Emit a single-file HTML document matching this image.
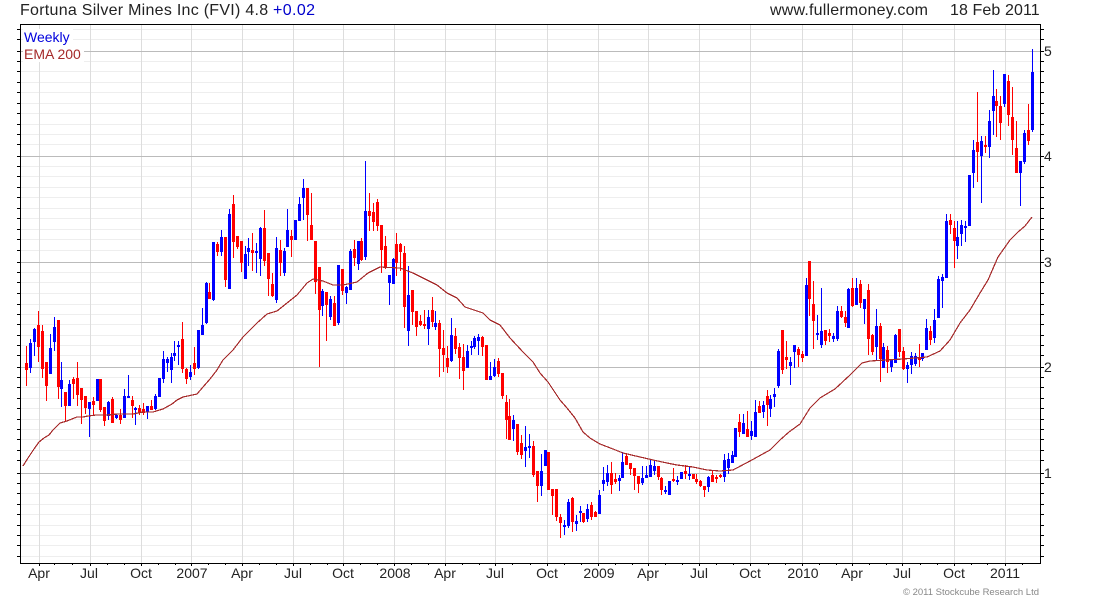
<!DOCTYPE html>
<html><head><meta charset="utf-8"><title>Fortuna Silver Mines Inc (FVI)</title>
<style>
html,body{margin:0;padding:0;background:#fff;width:1100px;height:600px;overflow:hidden}
svg{display:block}
text{font-family:"Liberation Sans",Arial,sans-serif}
.l{font-size:14px;fill:#222;text-anchor:middle}
.r{font-size:14px;fill:#222}
.t{font-size:16px;fill:#222}
</style></head><body>
<svg width="1100" height="600" viewBox="0 0 1100 600" xmlns="http://www.w3.org/2000/svg">
<rect width="1100" height="600" fill="#fff"/>
<g shape-rendering="crispEdges" fill="none">
<!-- minor horizontal grid -->
<path stroke="#eee" d="M21 29.5H1040M21 39.5H1040M21 61.5H1040M21 71.5H1040M21 82.5H1040M21 92.5H1040M21 103.5H1040M21 113.5H1040M21 124.5H1040M21 134.5H1040M21 144.5H1040M21 166.5H1040M21 176.5H1040M21 187.5H1040M21 197.5H1040M21 208.5H1040M21 218.5H1040M21 229.5H1040M21 239.5H1040M21 250.5H1040M21 272.5H1040M21 282.5H1040M21 293.5H1040M21 304.5H1040M21 314.5H1040M21 324.5H1040M21 335.5H1040M21 345.5H1040M21 355.5H1040M21 377.5H1040M21 387.5H1040M21 398.5H1040M21 408.5H1040M21 419.5H1040M21 429.5H1040M21 439.5H1040M21 450.5H1040M21 460.5H1040M21 483.5H1040M21 493.5H1040M21 504.5H1040M21 514.5H1040M21 525.5H1040M21 535.5H1040M21 545.5H1040M21 556.5H1040"/>
<!-- vertical grid -->
<path stroke="#ddd" d="M39.5 25V563M90.5 25V563M141.5 25V563M191.5 25V563M242.5 25V563M293.5 25V563M343.5 25V563M394.5 25V563M445.5 25V563M495.5 25V563M547.5 25V563M598.5 25V563M648.5 25V563M699.5 25V563M750.5 25V563M802.5 25V563M852.5 25V563M902.5 25V563M954.5 25V563M1005.5 25V563"/>
<!-- major horizontal grid -->
<path stroke="#bbb" d="M21 51.5H1040M21 156.5H1040M21 262.5H1040M21 367.5H1040M21 473.5H1040"/>
<!-- legend backing -->
<rect x="23" y="29" width="50" height="16" fill="#fff"/>
<rect x="23" y="45" width="61" height="17" fill="#fff"/>
<!-- red candles -->
<path stroke="#f00" stroke-width="1" d="M26.5 346V386M38.5 311V362M42.5 325V378M46.5 362V401M58.5 320V399M65.5 392V422M73.5 377V399M77.5 362V406M81.5 388V424M85.5 396V414M93.5 397V415M100.5 379V412M104.5 407V426M112.5 397V423M120.5 409V424M132.5 396V418M139.5 405V415M143.5 403V415M151.5 400V410M182.5 322V373M186.5 368V384M194.5 347V375M209.5 283V299M217.5 242V256M225.5 237V287M233.5 195V258M237.5 236V249M241.5 241V272M252.5 233V271M264.5 210V266M268.5 253V296M272.5 273V297M280.5 240V276M291.5 230V257M307.5 188V241M311.5 193V240M315.5 241V294M319.5 267V367M326.5 292V341M334.5 296V326M342.5 269V295M354.5 240V266M361.5 238V261M369.5 193V231M373.5 203V231M377.5 199V231M381.5 225V273M385.5 236V269M396.5 233V276M400.5 243V271M404.5 246V328M412.5 290V325M416.5 311V336M420.5 315V326M424.5 310V329M432.5 297V327M439.5 320V377M443.5 330V372M447.5 346V373M455.5 328V354M459.5 343V379M463.5 344V390M482.5 336V356M486.5 345V380M498.5 358V377M502.5 373V399M506.5 395V439M509.5 399V440M517.5 424V455M521.5 435V459M533.5 441V477M537.5 471V502M548.5 452V490M552.5 489V515M556.5 489V521M560.5 514V538M572.5 497V532M583.5 513V523M591.5 502V520M595.5 511V517M611.5 462V494M615.5 473V484M626.5 453V465M630.5 463V475M634.5 468V490M638.5 476V493M658.5 466V480M661.5 477V495M673.5 468V482M685.5 465V479M693.5 474V479M696.5 474V484M700.5 480V487M704.5 486V497M712.5 471V482M716.5 475V483M720.5 474V478M739.5 414V437M747.5 411V437M759.5 401V413M767.5 390V426M782.5 330V374M786.5 341V369M798.5 347V367M802.5 351V362M809.5 261V316M813.5 281V349M825.5 330V345M829.5 329V342M841.5 306V318M845.5 311V327M852.5 278V307M860.5 280V308M868.5 284V355M872.5 334V355M880.5 323V382M887.5 346V373M899.5 329V357M903.5 347V370M919.5 344V367M930.5 326V345M950.5 214V234M954.5 221V268M977.5 92V182M985.5 136V153M996.5 89V137M1000.5 96V140M1008.5 75V126M1012.5 87V155M1016.5 121V173M1028.5 104V145"/>
<path stroke="#f00" stroke-width="3" d="M26.5 363V370M38.5 325V347M42.5 331V369M46.5 362V386M58.5 320V387M65.5 392V406M73.5 379V384M77.5 378V395M81.5 388V400M85.5 396V408M93.5 401V405M100.5 379V410M104.5 407V421M112.5 399V423M120.5 415V420M132.5 400V406M139.5 408V413M143.5 409V413M151.5 406V410M182.5 339V369M186.5 369V379M194.5 363V369M209.5 292V299M217.5 244V252M225.5 237V280M233.5 204V242M237.5 236V247M241.5 241V263M252.5 250V253M264.5 228V261M268.5 253V279M272.5 284V296M280.5 250V263M291.5 236V240M307.5 188V215M311.5 225V240M315.5 241V282M319.5 267V310M326.5 292V305M334.5 303V326M342.5 269V291M354.5 249V258M361.5 241V260M369.5 211V216M373.5 212V222M377.5 202V226M381.5 225V250M385.5 246V268M396.5 244V263M400.5 244V252M404.5 253V307M412.5 290V312M416.5 311V327M420.5 321V325M424.5 324V326M432.5 310V322M439.5 323V349M443.5 348V355M447.5 358V367M455.5 336V349M459.5 347V358M463.5 357V371M482.5 337V347M486.5 345V380M498.5 361V374M502.5 373V396M506.5 402V420M509.5 416V440M517.5 424V452M521.5 443V455M533.5 446V475M537.5 471V486M548.5 452V490M552.5 489V496M556.5 489V517M560.5 517V523M572.5 498V522M583.5 513V522M591.5 505V517M595.5 512V517M611.5 473V485M615.5 479V482M626.5 456V465M630.5 463V469M634.5 468V476M638.5 476V484M658.5 466V477M661.5 478V490M673.5 479V481M685.5 471V474M693.5 474V479M696.5 479V482M700.5 481V486M704.5 486V490M712.5 475V482M716.5 477V479M720.5 475V477M739.5 422V432M747.5 429V437M759.5 406V413M767.5 396V405M782.5 330V370M786.5 357V360M798.5 349V355M802.5 354V358M809.5 261V299M813.5 304V321M825.5 330V341M829.5 333V336M841.5 311V317M845.5 317V323M852.5 288V306M860.5 284V303M868.5 290V339M872.5 335V352M880.5 326V359M887.5 350V362M899.5 329V352M903.5 351V369M919.5 357V360M930.5 331V340M950.5 220V225M954.5 228V241M977.5 142V152M985.5 145V147M996.5 101V106M1000.5 106V123M1008.5 81V115M1012.5 117V140M1016.5 148V173M1028.5 130V141"/>
<!-- blue candles -->
<path stroke="#00f" stroke-width="1" d="M30.5 339V373M34.5 328V356M50.5 334V374M54.5 317V351M61.5 362V407M69.5 380V406M89.5 402V437M97.5 379V401M108.5 401V420M116.5 414V419M124.5 389V418M128.5 375V398M135.5 407V425M147.5 406V419M155.5 394V410M159.5 378V397M163.5 351V383M167.5 357V372M171.5 353V383M174.5 341V361M178.5 341V365M190.5 365V380M198.5 330V369M202.5 308V335M206.5 282V324M213.5 242V301M221.5 230V256M229.5 209V289M245.5 246V279M248.5 238V266M256.5 243V273M260.5 227V276M276.5 237V303M284.5 248V276M287.5 209V247M295.5 220V240M299.5 197V221M303.5 179V220M322.5 289V316M330.5 296V320M338.5 265V325M346.5 286V304M350.5 249V290M358.5 241V270M365.5 161V260M389.5 275V305M393.5 258V284M408.5 266V346M428.5 310V345M435.5 311V330M451.5 318V362M467.5 345V368M471.5 341V355M474.5 336V349M478.5 334V355M490.5 362V380M494.5 359V377M513.5 415V441M525.5 426V467M529.5 434V458M541.5 454V496M545.5 450V466M564.5 520V535M568.5 499V528M576.5 515V531M580.5 506V522M587.5 504V522M599.5 490V514M603.5 467V491M607.5 465V486M619.5 475V491M622.5 452V478M642.5 466V485M646.5 466V478M650.5 459V477M654.5 461V475M665.5 486V494M669.5 481V495M677.5 476V485M681.5 472V479M689.5 467V480M708.5 476V492M724.5 454V482M728.5 453V474M732.5 451V463M735.5 428V457M743.5 414V434M751.5 421V440M755.5 400V437M763.5 401V418M770.5 395V417M774.5 388V407M778.5 349V388M790.5 357V385M794.5 345V368M806.5 278V356M817.5 315V340M821.5 288V348M833.5 333V342M837.5 306V341M848.5 288V328M856.5 278V305M864.5 299V324M876.5 309V360M883.5 343V368M891.5 359V372M895.5 334V363M907.5 362V383M911.5 352V374M915.5 353V366M922.5 353V361M926.5 319V350M934.5 309V343M938.5 276V318M942.5 274V308M946.5 214V278M957.5 221V259M961.5 220V246M965.5 221V242M969.5 175V226M973.5 140V188M981.5 136V203M989.5 110V158M993.5 70V135M1004.5 74V107M1020.5 161V206M1024.5 130V164M1032.5 49V132"/>
<path stroke="#00f" stroke-width="3" d="M30.5 343V368M34.5 329V342M50.5 348V374M54.5 327V342M61.5 380V389M69.5 384V406M89.5 402V409M97.5 379V401M108.5 402V416M116.5 415V418M124.5 396V418M128.5 396V398M135.5 408V410M147.5 406V412M155.5 396V409M159.5 378V397M163.5 359V379M167.5 359V363M171.5 357V370M174.5 353V356M178.5 345V347M190.5 372V377M198.5 330V368M202.5 325V335M206.5 283V323M213.5 242V300M221.5 237V252M229.5 214V289M245.5 254V279M248.5 248V252M256.5 251V253M260.5 228V259M276.5 248V300M284.5 251V273M287.5 230V247M295.5 220V240M299.5 204V221M303.5 188V198M322.5 291V306M330.5 299V317M338.5 265V323M346.5 287V293M350.5 251V290M358.5 241V264M365.5 211V257M389.5 275V283M393.5 259V284M408.5 295V331M428.5 317V329M435.5 323V327M451.5 335V361M467.5 351V368M471.5 346V348M474.5 338V347M478.5 337V341M490.5 376V380M494.5 367V376M513.5 420V429M525.5 447V451M529.5 446V448M541.5 471V486M545.5 450V466M564.5 525V527M568.5 502V526M576.5 521V524M580.5 511V513M587.5 509V519M599.5 495V514M603.5 480V484M607.5 473V482M619.5 478V481M622.5 462V478M642.5 478V483M646.5 475V478M650.5 465V477M654.5 466V471M665.5 490V492M669.5 481V495M677.5 480V482M681.5 472V479M689.5 474V476M708.5 477V487M724.5 460V477M728.5 459V468M732.5 455V463M735.5 428V457M743.5 423V434M751.5 431V436M755.5 412V437M763.5 405V412M770.5 399V409M774.5 394V397M778.5 351V386M790.5 362V366M794.5 345V352M806.5 285V356M817.5 333V335M821.5 331V345M833.5 336V339M837.5 311V339M848.5 289V328M856.5 288V305M864.5 299V309M876.5 326V347M883.5 347V368M891.5 360V367M895.5 335V363M907.5 365V369M911.5 356V365M915.5 356V364M922.5 353V359M926.5 328V350M934.5 320V338M938.5 279V318M942.5 277V281M946.5 221V278M957.5 237V246M961.5 225V234M965.5 226V228M969.5 175V226M973.5 150V173M981.5 141V156M989.5 121V147M993.5 96V111M1004.5 74V104M1020.5 161V173M1024.5 133V162M1032.5 72V130"/>
<!-- EMA -->
<polyline stroke="#a52a2a" stroke-width="1.2" points="23,466 28,458 34,449 39,442 44,438 49,435 53,430 60,423 67,421 72,419 77,417 83,417 88,416 96,415 107,415 118,414 133,414 143,412 153,412 163,409 172,404 177,400 183,397 197,394 203,387 210,379 217,370 223,360 233,350 243,337 257,323 267,314 277,311 287,303 297,295 307,283 313,279 323,281 333,285 343,285 357,282 368,273 380,267 400,268 413,273 423,278 437,285 447,293 457,298 465,307 483,313 490,320 500,325 510,338 523,352 533,362 540,373 548,382 560,400 567,408 575,418 583,432 590,438 600,444 613,449 623,453 640,457 653,460 667,463 677,465 693,467 707,470 720,471 733,470 750,461 770,450 780,440 789,432 800,424 810,408 820,398 830,392 835,389 850,375 862,363 870,361 903,359 927,357 940,351 950,340 960,323 970,310 980,293 988,280 998,257 1010,240 1018,232 1025,226 1032,217"/>
<!-- y ticks left -->
<path stroke="#000" d="M17 29.5H20M17 39.5H20M17 51.5H20M17 61.5H20M17 71.5H20M17 82.5H20M17 92.5H20M17 103.5H20M17 113.5H20M17 124.5H20M17 134.5H20M17 144.5H20M17 156.5H20M17 166.5H20M17 176.5H20M17 187.5H20M17 197.5H20M17 208.5H20M17 218.5H20M17 229.5H20M17 239.5H20M17 250.5H20M17 262.5H20M17 272.5H20M17 282.5H20M17 293.5H20M17 304.5H20M17 314.5H20M17 324.5H20M17 335.5H20M17 345.5H20M17 355.5H20M17 367.5H20M17 377.5H20M17 387.5H20M17 398.5H20M17 408.5H20M17 419.5H20M17 429.5H20M17 439.5H20M17 450.5H20M17 460.5H20M17 473.5H20M17 483.5H20M17 493.5H20M17 504.5H20M17 514.5H20M17 525.5H20M17 535.5H20M17 545.5H20M17 556.5H20"/>
<!-- y ticks right -->
<path stroke="#000" d="M1041 29.5H1044M1041 39.5H1044M1041 51.5H1044M1041 61.5H1044M1041 71.5H1044M1041 82.5H1044M1041 92.5H1044M1041 103.5H1044M1041 113.5H1044M1041 124.5H1044M1041 134.5H1044M1041 144.5H1044M1041 156.5H1044M1041 166.5H1044M1041 176.5H1044M1041 187.5H1044M1041 197.5H1044M1041 208.5H1044M1041 218.5H1044M1041 229.5H1044M1041 239.5H1044M1041 250.5H1044M1041 262.5H1044M1041 272.5H1044M1041 282.5H1044M1041 293.5H1044M1041 304.5H1044M1041 314.5H1044M1041 324.5H1044M1041 335.5H1044M1041 345.5H1044M1041 355.5H1044M1041 367.5H1044M1041 377.5H1044M1041 387.5H1044M1041 398.5H1044M1041 408.5H1044M1041 419.5H1044M1041 429.5H1044M1041 439.5H1044M1041 450.5H1044M1041 460.5H1044M1041 473.5H1044M1041 483.5H1044M1041 493.5H1044M1041 504.5H1044M1041 514.5H1044M1041 525.5H1044M1041 535.5H1044M1041 545.5H1044M1041 556.5H1044"/>
<!-- x ticks -->
<path stroke="#000" d="M39.5 564V566M90.5 564V566M141.5 564V566M191.5 564V566M242.5 564V566M293.5 564V566M343.5 564V566M394.5 564V566M445.5 564V566M495.5 564V566M547.5 564V566M598.5 564V566M648.5 564V566M699.5 564V566M750.5 564V566M802.5 564V566M852.5 564V566M902.5 564V566M954.5 564V566M1005.5 564V566M54.5 564V565M72.5 564V565M107.5 564V565M124.5 564V565M158.5 564V565M175.5 564V565M208.5 564V565M225.5 564V565M259.5 564V565M276.5 564V565M310.5 564V565M327.5 564V565M360.5 564V565M377.5 564V565M411.5 564V565M428.5 564V565M462.5 564V565M479.5 564V565M512.5 564V565M530.5 564V565M564.5 564V565M581.5 564V565M615.5 564V565M632.5 564V565M665.5 564V565M682.5 564V565M716.5 564V565M733.5 564V565M768.5 564V565M785.5 564V565M819.5 564V565M836.5 564V565M869.5 564V565M886.5 564V565M920.5 564V565M937.5 564V565M971.5 564V565M987.5 564V565M1022.5 564V565"/>
<!-- frame -->
<rect x="20.5" y="24.5" width="1020" height="539" stroke="#000" stroke-width="1"/>
</g>
<text class="t" x="20" y="15" letter-spacing="0.27">Fortuna Silver Mines Inc (FVI) 4.8</text>
<text class="t" x="273" y="15" letter-spacing="0.4" style="fill:#0000cc">+0.02</text>
<text class="t" x="770" y="15" letter-spacing="0.2">www.fullermoney.com</text>
<text class="t" x="950" y="15" letter-spacing="0.1">18 Feb 2011</text>
<text x="24" y="42" font-size="14" fill="#0000dd">Weekly</text>
<text x="24" y="59" font-size="14" fill="#a52a2a">EMA 200</text>
<text class="r" x="1044" y="56">5</text>
<text class="r" x="1044" y="161">4</text>
<text class="r" x="1044" y="267">3</text>
<text class="r" x="1044" y="372">2</text>
<text class="r" x="1044" y="478">1</text>
<text class="l" x="39" y="578">Apr</text>
<text class="l" x="89" y="578">Jul</text>
<text class="l" x="141" y="578">Oct</text>
<text class="l" x="192" y="578">2007</text>
<text class="l" x="242" y="578">Apr</text>
<text class="l" x="293" y="578">Jul</text>
<text class="l" x="343" y="578">Oct</text>
<text class="l" x="395" y="578">2008</text>
<text class="l" x="445" y="578">Apr</text>
<text class="l" x="495" y="578">Jul</text>
<text class="l" x="547" y="578">Oct</text>
<text class="l" x="599" y="578">2009</text>
<text class="l" x="648" y="578">Apr</text>
<text class="l" x="699" y="578">Jul</text>
<text class="l" x="750" y="578">Oct</text>
<text class="l" x="803" y="578">2010</text>
<text class="l" x="852" y="578">Apr</text>
<text class="l" x="902" y="578">Jul</text>
<text class="l" x="954" y="578">Oct</text>
<text class="l" x="1005" y="578">2011</text>
<text x="903" y="595" font-size="9.5" fill="#888" textLength="136">© 2011 Stockcube Research Ltd</text>
</svg>
</body></html>
